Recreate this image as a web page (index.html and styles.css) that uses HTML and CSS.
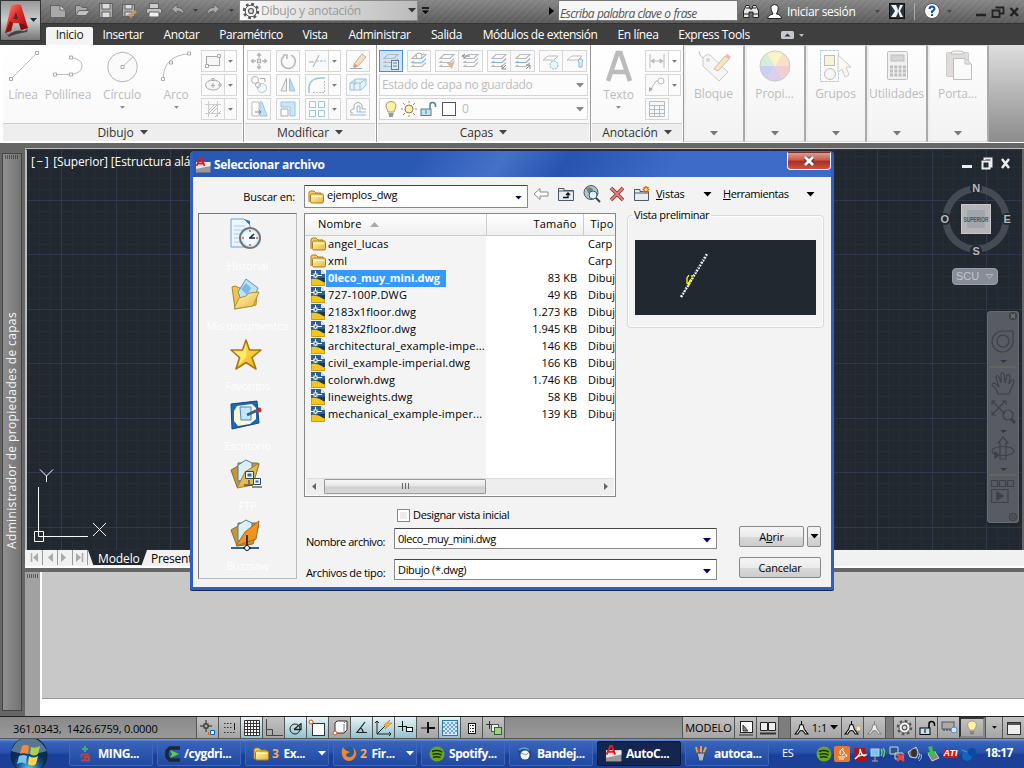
FILE: index.html
```html
<!DOCTYPE html>
<html lang="es">
<head>
<meta charset="utf-8">
<title>Seleccionar archivo</title>
<link rel="stylesheet" href="styles.css">
</head>
<body>
<svg class="defs" width="0" height="0">
  <defs>
    <linearGradient id="gold" x1="0" y1="0" x2="1" y2="1"><stop offset="0" stop-color="#fff8b8"/><stop offset="1" stop-color="#e8b53c"/></linearGradient>
    <linearGradient id="star" x1="0" y1="0" x2="1" y2="1"><stop offset="0" stop-color="#fff27a"/><stop offset="1" stop-color="#efae10"/></linearGradient>
    <linearGradient id="red" x1="0" y1="0" x2="1" y2="1"><stop offset="0" stop-color="#ff8a80"/><stop offset=".45" stop-color="#e02a25"/><stop offset="1" stop-color="#8e0b0d"/></linearGradient>
    <symbol id="folder" viewBox="0 0 16 16"><path d="M1 13V4Q1 2 3 2H6L8 4H13V6" fill="#f5cf62" stroke="#b07a14"/><rect x="2.500" y="5" width="13" height="9" rx="1.500" fill="url(#gold)" stroke="#b07a14"/><path d="M4 7.500H14" stroke="#fffbd8"/></symbol>
    <symbol id="dwg" viewBox="0 0 16 16"><path d="M1 0H11L15 4V16H1Z" fill="#2d5f8c"/><path d="M1 9Q8 8 15 13V16H1Z" fill="#f5c518"/><path d="M7 8L15 13V8Z" fill="#173a5c"/><path d="M11 0V4H15Z" fill="#dce8f2"/><path d="M5.500 1V8M1 5.500H12" stroke="#fff"/><rect x="4" y="4" width="3" height="3" fill="#2d5f8c" stroke="#fff"/><path d="M1.500 9V15.500H14.500V12" fill="none" stroke="#d29a10"/></symbol>
    <symbol id="acad" viewBox="0 0 16 16"><path d="M1 5H15.500V15.500H1Z" fill="#999"/><path d="M1 5H15.500V9L1 12Z" fill="#e8e8e8"/><path d="M1.500 9L5 1H6.500L9.500 9M3 6.500H8.500" fill="none" stroke="#e81818" stroke-width="1.800"/></symbol>
    <symbol id="dd" viewBox="0 0 8 5"><path d="M0 0H8L4 4.500Z" fill="currentColor"/></symbol>
    <symbol id="layers" viewBox="0 0 18 18"><path d="M6 2.500H16L12 6.500H2ZM4 9L2 10.500H12L16 6.500M4 13L2 14.500H12L16 10.500" fill="none" stroke="#b5babe" stroke-width="1.100"/></symbol>
    <symbol id="bulb" viewBox="0 0 16 18"><path d="M5 12Q5 10 3.500 8.500Q1.500 2 8 1.500Q14.500 2 12.500 8.500Q11 10 11 12Z" fill="#fff0a8" stroke="#a49668"/><path d="M5.500 14H10.500M6 16H10" stroke="#777" stroke-width="1.500"/></symbol>
    <symbol id="gear" viewBox="0 0 18 18"><circle cx="9" cy="9" r="7" fill="none" stroke="#555" stroke-width="2.500" stroke-dasharray="2.800 2.700"/><circle cx="9" cy="9" r="5.800" fill="#f4f4f4" stroke="#555"/><circle cx="9" cy="9" r="2.500" fill="#ddd" stroke="#555" stroke-width="1.200"/></symbol>
    <symbol id="lock" viewBox="0 0 18 16"><path d="M11 8V4Q11 1.500 13.500 1.500T16.500 4V6" fill="none" stroke="currentColor" stroke-width="1.500"/><rect x="2" y="8" width="10" height="6.500" fill="#bfe4f2" stroke="currentColor"/><path d="M7 9V13" stroke="currentColor"/></symbol>
    <symbol id="compass" viewBox="0 0 16 16"><path d="M8 1V5M6.500 5L5 10L1 15H4L6 12Q8 10.500 10 12L12 15H15L11 10L9.500 5Z" fill="#eee" stroke="currentColor" stroke-width="1.100"/></symbol>
    <symbol id="spot" viewBox="0 0 16 16"><circle cx="8" cy="8" r="7.500" fill="#6da719"/><path d="M3 5.500Q8 3.500 13 6M3.500 8.500Q8 7 12.500 9M4 11.200Q8 10 11.500 11.700" fill="none" stroke="#143408" stroke-width="1.500"/></symbol>
  </defs>
</svg>

<header class="titlebar">
  <div class="quick">
    <svg width="340" height="24" viewBox="41 0 340 24" fill="#a9a9a9" stroke="#626262">
      <path d="M50.500 5.500H60L65.500 10V17.500H50.500Z"/><path d="M60 6V10H65" fill="#ddd"/>
      <path d="M75.500 15.500V5.500H80L82 7.500H87V10.500H79Z"/><path d="M75.500 15.500L79 10.500H90L86 15.500Z" fill="#c2c2c2"/>
      <rect x="99.500" y="3.500" width="13" height="14"/><path d="M102 4V9H110V4M102 17V12H110V17" fill="#ddd"/>
      <rect x="122.500" y="4.500" width="12" height="12"/><path d="M125 5V9H132V5M125 16V12H132" fill="#ddd"/><path d="M130 17L136 11" stroke="#c99842" stroke-width="2.500"/>
      <rect x="149.500" y="3.500" width="9" height="5" fill="#ccc"/><rect x="146.500" y="8.500" width="15" height="5" rx="1.500" fill="#c2c2c2"/><path d="M149 12H159V17H149Z" fill="#eee"/>
      <path d="M171.500 9L177 4V7.500Q184 7 184 15Q182 11 177 11V14Z"/>
      <path d="M219.500 9L214 4V7.500Q207 7 207 15Q209 11 214 11V14Z"/>
      <path d="M193 9H198L195.500 12ZM229 9H234L231.500 12Z" fill="#3d3d3d" stroke="none"/>
    </svg>
  </div>
  <div class="workspace"><svg width="18" height="18"><use href="#gear"/></svg><span>Dibujo y anotación</span><svg class="dd" width="8" height="5"><use href="#dd"/></svg></div>
  <svg class="customize" width="9" height="8"><path d="M1 1H8" stroke="#000" stroke-width="1.500"/><path d="M1 3.500H8L4.500 7Z"/></svg>
  <div class="stretch"><svg width="5" height="8"><path d="M0 0L5 4L0 8Z"/></svg></div>
  <div class="search">Escriba palabra clave o frase</div>
  <div class="session">
    <svg width="44" height="18" viewBox="0 0 44 18" stroke="#222"><path d="M1.500 15.500V9L4 3.500H7L8 7H10L11 3.500H14L16.500 9V15.500H11V10H7V15.500Z" fill="#e8e8e8"/><path d="M2 12H7M11 12H16M4 6H7M11 6H14"/><path d="M25.500 16.500Q26 13 31 12Q26 3 32.500 2.500Q39 3 34.500 12Q39.500 13 39.500 16.500Z" fill="#fff"/></svg>
    <span>Iniciar sesión</span>
  </div>
  <svg class="winctl" width="160" height="24" viewBox="864 0 160 24">
    <path d="M875 10H880L877.500 13ZM947 10H952L949.500 13Z" fill="#444"/>
    <rect x="889.500" y="3.500" width="15" height="15" fill="#26333f" stroke="#111"/><path d="M891 5H896Q898 8 898 11T896 17H891L895 11ZM903 5H900L898 11L900 17H903L900 11Z" fill="#eef3f6"/>
    <path d="M914.500 3V20" stroke="#aaa"/>
    <circle cx="932" cy="11" r="7.500" fill="#fff" stroke="#555"/><path d="M929.500 9Q929.500 6.500 932 6.500T934.500 9Q934 10.500 932 11.500V13M932 14V16" fill="none" stroke="#0a50b4" stroke-width="2"/>
    <path d="M976 15H986" stroke="#222" stroke-width="2.500"/><path d="M995.500 7.500H1003.500V13.500H1000M992.500 10.500H999.500V17H992.500Z" fill="none" stroke="#222" stroke-width="1.800"/><path d="M1010.500 8L1018 16M1018 8L1010.500 16" stroke="#222" stroke-width="2.500"/>
  </svg>
</header>

<nav class="tabs">
  <span class="t1 on">Inicio</span><span class="t2">Insertar</span><span class="t3">Anotar</span><span class="t4">Paramétrico</span><span class="t5">Vista</span><span class="t6">Administrar</span><span class="t7">Salida</span><span class="t8">Módulos de extensión</span><span class="t9">En línea</span><span class="t10">Express Tools</span>
  <svg class="mini" width="26" height="10"><rect x="1" y="1" width="13" height="8" rx="1.500" fill="#c6c9cf"/><path d="M4.500 6.500L7.500 3.500L10.500 6.500Z" fill="#333"/><path d="M19 4H24L21.500 7Z" fill="#b4b8c0"/></svg>
</nav>
<div class="appbtn"><svg width="39" height="39"><path d="M4 32L7 34Q14 28 23 30L27 28L26 31Q14 33 8 36Z" fill="#444"/><path d="M10 5Q14 2 20 4L27 27L20 29L18 22H12L10 30L4 32Z" fill="url(#red)"/><path d="M12 18H17L15 11Z" fill="#6c2424"/><path d="M4 32L10 30L12 22L9 20Z" fill="#8a1212"/><path d="M18 22L20 29L27 27L24 24Z" fill="#7d0f0f"/><path d="M29 17H36L32.500 21Z" fill="#1d2a3c"/></svg></div>

<section class="ribbon">
  <div class="panel dibujo">
    <div class="tools">
      <div class="big w40"><svg width="34" height="34"><path d="M5 29L31 3" stroke="#bbb"/><path d="M3.500 27.500h3v3h-3ZM29.500 1.500h3v3h-3Z" fill="#fff" stroke="#aaa"/></svg><span>Línea</span></div>
      <div class="big w50"><svg width="34" height="34"><path d="M4 24.500H20Q31 23 31 16T20 7.500" fill="none" stroke="#bbb"/><path d="M2.500 23h3v3h-3ZM18.500 23h3v3h-3ZM18.500 6h3v3h-3Z" fill="#fff" stroke="#aaa"/></svg><span>Polilínea</span></div>
      <div class="big w56"><svg width="34" height="34"><circle cx="17.500" cy="17" r="14.800" fill="#fafafa" stroke="#b5b5b5"/><path d="M17 17L28 7" stroke="#bbb"/><path d="M16 15.500h3v3h-3Z" fill="#fff" stroke="#aaa"/></svg><span>Círculo</span><svg class="car" width="5" height="3"><use href="#dd"/></svg></div>
      <div class="big w50"><svg width="34" height="34"><path d="M4 29Q5 5 30 4" fill="none" stroke="#bbb"/><path d="M2.500 27.500h3v3h-3ZM10.500 11h3v3h-3ZM28.500 2h3v3h-3Z" fill="#fff" stroke="#aaa"/></svg><span>Arco</span><svg class="car" width="5" height="3"><use href="#dd"/></svg></div>
      <div class="col">
        <div class="split"><b><svg width="18" height="16"><rect x="2.500" y="3.500" width="13" height="9" fill="#f6f6f6" stroke="#aaa"/><path d="M1.500 11.500h3v3h-3ZM13.500 1.500h3v3h-3Z" fill="#fff" stroke="#aaa"/></svg></b><i><svg width="5" height="3"><use href="#dd"/></svg></i></div>
        <div class="split"><b><svg width="18" height="16"><ellipse cx="9" cy="8" rx="7.500" ry="5" fill="#f6f6f6" stroke="#aaa"/><path d="M7 8.500H11M9 6V11M8 1.500h2v2H8ZM15 7h2v2h-2Z" stroke="#aaa" fill="#fff"/></svg></b><i><svg width="5" height="3"><use href="#dd"/></svg></i></div>
        <div class="split"><b><svg width="18" height="18"><path d="M4.500 1V17M13.500 1V17M1 4.500H17M1 13.500H17" stroke="#ccc"/><path d="M5 10L10 5M5 13L13 5M8 13L13 8M11 17L17 11" stroke="#bbb"/></svg></b><i><svg width="5" height="3"><use href="#dd"/></svg></i></div>
      </div>
    </div>
    <div class="ptitle">Dibujo <svg width="8" height="5"><use href="#dd"/></svg></div>
  </div>

  <div class="panel modificar">
    <div class="tools grid4">
      <b><svg width="18" height="18"><path d="M9 1V6M9 12V17M1 9H6M12 9H17M7 3.500L9 1.500L11 3.500M7 14.500L9 16.500L11 14.500M3.500 7L1.500 9L3.500 11M14.500 7L16.500 9L14.500 11M7.500 7.500h3v3h-3Z" fill="none" stroke="#b5b5b5" stroke-width="1.300"/></svg></b>
      <b><svg width="18" height="18"><path d="M5 4A7 7 0 1 0 12 3M4 3H8V7" fill="none" stroke="#b9b9b9" stroke-width="1.600"/></svg></b>
      <div class="split"><b><svg width="18" height="18"><path d="M1 10H6M5 15L11 3" stroke="#aaa"/><path d="M8 9H18" stroke="#8fbfe2" stroke-dasharray="3 1"/></svg></b><i><svg width="5" height="3"><use href="#dd"/></svg></i></div>
      <b><svg width="20" height="18"><path d="M6 12L14 2L18 5L10 14Z" fill="#f3dfc0" stroke="#c4b199"/><path d="M6 12L10 14Q7 17 5 15Z" fill="#e69378"/><path d="M2 16.500H14" stroke="#aaa"/></svg></b>
      <b><svg width="18" height="18" fill="none"><circle cx="5" cy="4" r="3.500" stroke="#b5b5b5"/><circle cx="12" cy="12" r="4.500" stroke="#a4c9e5"/><circle cx="8" cy="9" r="2.500" stroke="#b5b5b5"/><path d="M10 2.500H15V6" stroke="#aaa"/></svg></b>
      <b><svg width="18" height="18"><path d="M7.500 2L2 15H7.500Z" fill="#eee" stroke="#b5b5b5"/><path d="M10.500 2L16 15H10.500Z" fill="#b9ddf3" stroke="#9cc5e0"/></svg></b>
      <div class="split"><b><svg width="18" height="18" fill="none"><path d="M1 17V10Q3 2 13 2H17" stroke="#9cc5e0" stroke-width="1.500"/><path d="M5 16.500H16.500V5" stroke="#bbb" stroke-dasharray="2 1"/></svg></b><i><svg width="5" height="3"><use href="#dd"/></svg></i></div>
      <b><svg width="20" height="18"><path d="M2 7L8 3H18V9L13 14H2ZM2 7H12V14M12 7L18 3M7 3V9M6 7V14" fill="#e6f3fa" stroke="#9cc0d4"/></svg></b>
      <b><svg width="18" height="18"><path d="M2 2H9V16H2Z" fill="#fff" stroke="#bbb"/><path d="M10 2H12L17 16H10Z" fill="#c4e2f4" stroke="#9cc5df"/><path d="M5 12H11M9 10L11 12L9 14" stroke="#888" fill="none"/></svg></b>
      <b><svg width="18" height="18"><path d="M2 2H16V16H11V7H2Z" fill="#cbe7f6" stroke="#9cc5df"/><path d="M2 9H9V16H2Z" fill="#fff" stroke="#aaa"/></svg></b>
      <div class="split"><b><svg width="18" height="18" fill="#fff" stroke="#9fc5e0"><path d="M1.500 1.500h6v6h-6ZM10.500 1.500h6v6h-6ZM1.500 10.500h6v6h-6ZM10.500 10.500h6v6h-6Z"/></svg></b><i><svg width="5" height="3"><use href="#dd"/></svg></i></div>
      <b><svg width="20" height="18" fill="none"><path d="M5 13H3Q1 10 5 9H6V5Q10 0 14 5V9H18" stroke="#aaa"/><path d="M2 15H18M9 12H18M9 12V6H12V12" stroke="#8fbde0"/></svg></b>
    </div>
    <div class="ptitle">Modificar <svg width="8" height="5"><use href="#dd"/></svg></div>
  </div>

  <div class="panel capas">
    <div class="tools col">
      <div class="lrow">
        <b class="sel"><svg width="18" height="18"><use href="#layers"/><rect x="9.500" y="8.500" width="7" height="9" fill="#d9eafa" stroke="#6a7a90"/><path d="M11 11H15M11 14H15" stroke="#5a86b0"/></svg></b>
        <b><svg width="18" height="18"><use href="#layers"/><circle cx="9" cy="4" r="3" fill="#fff" stroke="#aaa"/><path d="M2 11H12L16 7" stroke="#8fc0e8" fill="none"/></svg></b>
        <div><b><svg width="18" height="18"><use href="#layers"/><path d="M8 10L13 11L17 8L14 17Z" fill="#dfb793"/></svg></b><b><svg width="18" height="18"><use href="#layers"/><path d="M0 4H8M0 4L3 2M0 4L3 6" stroke="#888" fill="none"/></svg></b></div>
        <div><b><svg width="18" height="18"><use href="#layers"/><path d="M2 10.500H12L16 6.500" stroke="#7eb0df" fill="none"/><path d="M16 13L12 17M12 13V17H16" stroke="#888" fill="none"/></svg></b><b><svg width="18" height="18"><use href="#layers"/><path d="M2 10.500H12L16 6.500" stroke="#7eb0df" fill="none"/><path d="M12 17L16 13H12M16 13V17" stroke="#888" fill="none"/></svg></b></div>
        <div><b><svg width="18" height="18"><path d="M6 4H16L12 8H1Z" fill="#fff" stroke="#bbb"/><circle cx="12" cy="13" r="4" fill="#e8f6fd" stroke="#79b5dd" stroke-dasharray="2 1"/></svg></b><b><svg width="18" height="18"><path d="M6 4H16L12 8H1Z" fill="#fff" stroke="#bbb"/><path d="M13 15H16V11Q18 7 14.500 7T13 11Z" fill="#dcefff" stroke="#8bb6d8"/></svg></b></div>
      </div>
      <div class="combo"><span>Estado de capa no guardado</span><svg width="8" height="5"><use href="#dd"/></svg></div>
      <div class="combo"><svg width="16" height="18"><use href="#bulb"/></svg><svg width="16" height="16"><circle cx="8" cy="8" r="4" fill="#fff0ad" stroke="#917d53"/><path d="M8 0V2M8 14V16M0 8H2M14 8H16M2 2L4 4M12 12L14 14M2 14L4 12M12 4L14 2" stroke="#a78d61"/></svg><svg class="steel" width="18" height="16"><use href="#lock"/></svg><em></em><span>0</span><svg class="last" width="8" height="5"><use href="#dd"/></svg></div>
    </div>
    <div class="ptitle">Capas <svg width="8" height="5"><use href="#dd"/></svg></div>
  </div>

  <div class="panel anot">
    <div class="tools">
      <div class="big w53"><svg width="34" height="34"><path d="M6 31L15.500 3H18.500L28 31M10 22H24" fill="none" stroke="#bbb" stroke-width="4.500"/></svg><span>Texto</span><svg class="car" width="5" height="3"><use href="#dd"/></svg></div>
      <div class="col">
        <div class="split"><b><svg width="18" height="16"><path d="M2 1V15M16 1V15M3 8H15M3 8L6 6V10ZM15 8L12 6V10Z" fill="#bbb" stroke="#bbb"/></svg></b><i><svg width="5" height="3"><use href="#dd"/></svg></i></div>
        <div class="split"><b><svg width="18" height="16"><circle cx="13" cy="4" r="3" fill="#fff" stroke="#bbb"/><path d="M10 4H8L3 12" stroke="#bbb" fill="none"/><path d="M1 15V10L5 12Z" fill="#aaa"/></svg></b><i><svg width="5" height="3"><use href="#dd"/></svg></i></div>
        <b><svg width="18" height="16"><path d="M1.500 .500H16.500V15.500H1.500ZM1 4.500H17M1 8.500H17M1 12.500H17M6.500 5V15M11.500 5V15" fill="#f5f8fb" stroke="#b7bcc2"/></svg></b>
      </div>
    </div>
    <div class="ptitle">Anotación <svg width="8" height="5"><use href="#dd"/></svg></div>
  </div>

  <div class="slim"><svg width="34" height="34"><path d="M2 2Q3 9 9 10" fill="none" stroke="#aaa"/><path d="M6 9Q8 5 13 6L31 23L22 32L6 17Z" fill="#f5f5f5" stroke="#bbb"/><circle cx="11" cy="11" r="2" fill="#ccc"/><path d="M17 20L28 7L32 10L21 22Z" fill="#f6dfac" stroke="#cba785"/><path d="M29 6L33 9" stroke="#e7a49b" stroke-width="3"/></svg><span>Bloque</span><svg class="car" width="8" height="5"><use href="#dd"/></svg></div>
  <div class="slim"><svg width="34" height="34" viewBox="-17 -17 34 34"><path d="M0 0L-8 -13A15 15 0 0 1 8 -13Z" fill="#fbf2b7"/><path d="M0 0L8 -13A15 15 0 0 1 15 0Z" fill="#f8d7b7"/><path d="M0 0H15A15 15 0 0 1 8 13Z" fill="#eec0c4"/><path d="M0 0L8 13A15 15 0 0 1 -8 13Z" fill="#d4c1e6"/><path d="M0 0L-8 13A15 15 0 0 1 -15 0Z" fill="#b7c3f0"/><path d="M0 0H-15A15 15 0 0 1 -8 -13Z" fill="#c9ebc8"/><circle r="15" fill="none" stroke="#bbb"/></svg><span>Propi...</span><svg class="car" width="8" height="5"><use href="#dd"/></svg></div>
  <div class="slim"><svg width="34" height="34"><rect x="1.500" y="1.500" width="18" height="31" fill="none" stroke="#9cb8d8" stroke-dasharray="3 1"/><rect x="5.500" y="6.500" width="10" height="10" fill="#f8f1c8" stroke="#aaa"/><circle cx="11" cy="25" r="5.500" fill="#f4f4f4" stroke="#aaa"/><path d="M19 6V23L23 20L26 28L30 26L27 18H32Z" fill="#fffbe7" stroke="#bbc"/></svg><span>Grupos</span><svg class="car" width="8" height="5"><use href="#dd"/></svg></div>
  <div class="slim"><svg width="34" height="34"><rect x="7.500" y="2.500" width="20" height="28" rx="1" fill="#eee" stroke="#aaa"/><rect x="11" y="6" width="13" height="6" fill="#c9c9c9" stroke="#aaa"/><path d="M10 18H26M10 22H26M10 26H26" stroke="#aaa" stroke-width="3" stroke-dasharray="3 1.300"/></svg><span>Utilidades</span><svg class="car" width="8" height="5"><use href="#dd"/></svg></div>
  <div class="slim"><svg width="34" height="34"><rect x="5.500" y="3.500" width="22" height="24" rx="1" fill="#d7d1cd" stroke="#bbb"/><path d="M10 5Q10 2 13 2H20Q23 2 23 5Z" fill="#f3f3f3" stroke="#aaa"/><path d="M12.500 9.500H24L30.500 15V30.500H12.500Z" fill="#fafafa" stroke="#aaa"/><path d="M24 10V15H30" fill="#ddd" stroke="#aaa"/></svg><span>Porta...</span><svg class="car" width="8" height="5"><use href="#dd"/></svg></div>
</section>

<main class="work">
  <aside class="palette"><div><svg width="14" height="5"><path d="M0 1H14M0 3H14" stroke="#1c1c1c" stroke-dasharray="1 1"/></svg><span>Administrador de propiedades de capas</span></div></aside>
  <div class="docs">
    <section class="canvas">
      <p class="vlabel"><span>[−]</span> [Superior] [Estructura alá</p>
      <svg class="ucs" width="80" height="80" fill="none" stroke="#fff"><path d="M10.500 17V66.500H60" /><path d="M6.500 61.500h9v10h-9Z"/><path d="M12 -.500L18.500 6L25 -.500M18.500 6V12M65 53L78 66M78 53L65 66"/></svg>
      <svg class="wctl" width="52" height="14" stroke="#eee" fill="none"><path d="M0 9.500H10" stroke-width="3"/><path d="M22.500 3V1.500H29.500V9.500H28M20.500 4.500H27.500V11.500H20.500Z" stroke-width="2"/><path d="M40 2L47 11M47 2L40 11" stroke-width="2.500"/></svg>
      <svg class="cube" width="84" height="80" viewBox="934 178 84 80"><circle cx="976" cy="219" r="30" fill="none" stroke="#454b54" stroke-width="7"/><g fill="#212830"><circle cx="976" cy="188" r="6"/><circle cx="976" cy="251" r="6"/><circle cx="945" cy="219" r="6"/><circle cx="1007" cy="219" r="6"/></g><rect x="961.500" y="204.500" width="29" height="29" fill="#b5b5b5" stroke="#c8c8c8"/><rect x="967" y="210" width="18" height="18" fill="#a0a6ae"/><g class="pts"><text x="976" y="192">N</text><text x="976" y="255">S</text><text x="944.500" y="223">O</text><text x="1007" y="223">E</text></g><text class="sup" x="976" y="222" textLength="25" lengthAdjust="spacingAndGlyphs">SUPERIOR</text></svg>
      <div class="scu">SCU <svg width="9" height="6"><path d="M1 .500H8L4.500 4.500Z" fill="none" stroke="#b2b5bc"/></svg></div>
      <div class="navbar"><svg width="32" height="212" viewBox="0 0 32 212" fill="none" stroke="#3d4147" stroke-width="1.200"><circle cx="26" cy="5" r="3.500" fill="#444"/><path d="M24 3L28 7M28 3L24 7" stroke="#777"/><path d="M16 20H26V30A10.500 10.500 0 1 1 16 20Z"/><circle cx="16" cy="30" r="6"/><path d="M13 49H20L16.500 52ZM13 119H20L16.500 122ZM13 157H20L16.500 160Z" fill="#34383e" stroke="none"/><path d="M3 56H29M3 164H29" stroke="#6c7060"/><path d="M11 83Q9 77 5 74Q5 71 9 73L12 76L9 66Q10 63 12 66L14 72L14 63Q16 60 17 63L18 72L20 64Q22 62 23 66L22 73L25 69Q27 68 27 71L22 83Z"/><path d="M5 90L18 103M18 90L5 104M5 94V90H9M15 90H19V94M5 100V104H9"/><circle cx="21" cy="104" r="5"/><path d="M24 108L28 112" stroke-width="3"/><path d="M13 148V132H11L16 126L21 132H19V148Z"/><ellipse cx="16" cy="140" rx="11" ry="4.500"/><path d="M12 144L8 141V147Z" fill="#3d4147"/><path d="M4.500 169.500h6v6h-6ZM12.500 169.500h6v6h-6ZM20.500 169.500h6v6h-6ZM4.500 178.500H21V191.500H4.500Z"/><path d="M10 181V189L16 185Z" fill="#3d4147"/><circle cx="26" cy="206" r="3.500"/><path d="M24 205H28M24 207H28"/></svg></div>
    </section>
    <div class="layout">
      <svg width="61" height="15" fill="#aaa" stroke="#aaa"><path d="M4.500 3V12" stroke-width="1.500"/><path d="M11 3V12L6 7.500ZM26 3V12L21 7.500ZM34 3V12L39 7.500ZM49 3V12L54 7.500Z" stroke="none"/><path d="M55.500 3V12" stroke-width="1.500"/><path d="M15.500 0V15M30.500 0V15M45.500 0V15M60.500 0V15" stroke="#999"/></svg>
      <span class="model">Modelo</span><span class="present">Presentación1</span>
    </div>
    <section class="command"><i><svg width="12" height="5"><path d="M0 1H12M0 3H12" stroke="#1c1c1c" stroke-dasharray="1 1"/></svg></i><div><p></p><p class="prompt"></p></div></section>
  </div>
</main>

<footer class="status">
  <div class="coords">361.0343,&nbsp; 1426.6759, 0.0000</div>
  <b><svg width="18" height="18"><path d="M1 7H13M7 1V13" stroke="#222"/><rect x="5" y="5" width="4" height="4" fill="#aaa" stroke="#222"/><path d="M11.500 11.500h4v4h-4Z" fill="#fff" stroke="#06c"/><path d="M9.500 16V13" stroke="#e50"/></svg></b>
  <b><svg width="18" height="18"><path d="M3 4.500H11M3 8.500H11M3 13.500H14" stroke="#333" stroke-dasharray="1.500 1.500"/><path d="M13.500 4V11" stroke="#222"/></svg></b>
  <b class="on"><svg width="18" height="18"><path d="M1.500 1.500H16.500V16.500H1.500ZM4.500 2V16M7.500 2V16M10.500 2V16M13.500 2V16M2 4.500H16M2 7.500H16M2 10.500H16M2 13.500H16" fill="#fff" stroke="#333"/></svg></b>
  <b><svg width="18" height="18"><path d="M1.500 0V16.500H18M2 10.500H7.500V16" fill="none" stroke="#444"/></svg></b>
  <b class="on"><svg width="18" height="18" fill="none" stroke="#222"><circle cx="8" cy="10" r="5"/><path d="M7 10.500L14 4.500M14 4V10.500H7" stroke-width="1.300"/></svg></b>
  <b class="on"><svg width="20" height="18"><rect x="4.500" y="4.500" width="12" height="12" fill="#fff" stroke="#333"/><circle cx="3" cy="3" r="2" fill="#fff" stroke="#e64b1b"/></svg></b>
  <b><svg width="18" height="18"><path d="M4 4L6 2H16V11L13 14H4Z" fill="#fff" stroke="#333"/><path d="M13 5V13M13 4L15 2" stroke="#777"/><circle cx="4" cy="14" r="2" fill="#fff" stroke="#e64b1b"/></svg></b>
  <b class="on"><svg width="18" height="18"><path d="M12 3L4 13.500H14M7 9Q10 10 10 13" fill="none" stroke="#222" stroke-width="1.200"/></svg></b>
  <b class="on"><svg width="20" height="18"><path d="M3 2V15H17M3 15L11 7M1 4L3 2L5 4M15 13L17 15L15 17" fill="none" stroke="#222"/><path d="M16 1L10 6H13L11 10L18 4H14Z" fill="#ffba2e" stroke="#d77912" stroke-width=".600"/></svg></b>
  <b class="on"><svg width="18" height="18"><path d="M1 7.500H10M5.500 2V12" stroke="#111"/><rect x="9.500" y="8.500" width="6" height="4" fill="#fff" stroke="#111"/></svg></b>
  <b><svg width="18" height="18"><path d="M2 9H11" stroke="#111"/><path d="M9 3V14M9 9H16" stroke="#111" stroke-width="2"/></svg></b>
  <b class="on"><svg width="18" height="18"><rect x="1.500" y="1.500" width="15" height="15" fill="#d5eaff" stroke="#3577a0"/><path d="M2 4H16M2 8H16M2 12H16" stroke="#6ea6dd" stroke-width="2" stroke-dasharray="2 2"/><path d="M4 6H16M4 10H16M4 14H16" stroke="#6ea6dd" stroke-width="2" stroke-dasharray="2 2"/></svg></b>
  <b><svg width="18" height="18"><rect x="5.500" y="4.500" width="7" height="10" fill="#fff" stroke="#111"/><path d="M7 6.500H8M9 6.500H11M7 9.500H8M9 9.500H11M7 12.500H8M9 12.500H11" stroke="#222"/></svg></b>
  <b><svg width="18" height="18"><path d="M1 5.500H9M4.500 2V10" stroke="#333"/><rect x="6.500" y="5.500" width="7" height="7" fill="#eee" stroke="#555"/><rect x="9.500" y="8.500" width="7" height="7" fill="#a1cf86" stroke="#286a22"/></svg></b>
  <div class="sp"></div>
  <b class="w52">MODELO</b>
  <b><svg width="18" height="18"><rect x="3.500" y="2.500" width="12" height="11" fill="#fff" stroke="#222"/><path d="M6 6V12H11Z" fill="#888" stroke="#333"/><path d="M2 16H16" stroke="#333"/></svg></b>
  <b><svg width="18" height="18"><path d="M1.500 3.500H8.500V11.500H1.500ZM9.500 3.500H16.500V11.500H9.500Z" fill="#eee" stroke="#222"/><path d="M1 14.500H17" stroke="#333" stroke-width="2"/></svg></b>
  <u class="w12"></u>
  <b class="w51"><svg width="15" height="15"><use href="#compass"/></svg>&nbsp;1:1&nbsp;<svg width="8" height="5"><use href="#dd"/></svg></b>
  <b><svg width="15" height="15"><use href="#compass"/></svg><svg class="tinybulb" width="7" height="11"><use href="#bulb"/></svg></b>
  <b class="dim"><svg width="15" height="15"><use href="#compass"/></svg></b>
  <u class="w8"></u>
  <b><svg width="17" height="17"><use href="#gear"/></svg></b>
  <b><svg width="18" height="16"><use href="#lock"/></svg></b>
  <b><svg width="18" height="18"><rect x="2" y="3" width="12" height="7" fill="#aaa" stroke="#556"/><path d="M4 12V10M7 12V10M10 12V10" stroke="#333"/><circle cx="14" cy="11" r="3" fill="#cfe9fa" stroke="#58b"/></svg></b>
  <b class="w25"><svg width="14" height="17"><use href="#bulb"/></svg></b>
  <b class="w17"><svg width="5" height="3"><use href="#dd"/></svg></b>
  <b><svg width="16" height="14"><rect x="1.500" y="1.500" width="13" height="12" fill="#eee" stroke="#333"/><path d="M2 3H14" stroke="#555" stroke-width="2"/></svg></b>
</footer>

<footer class="taskbar">
  <div class="start"><svg width="42" height="29"><defs><radialGradient id="orb" cy=".9"><stop offset="0" stop-color="#5fd3f5"/><stop offset=".6" stop-color="#185a92"/><stop offset="1" stop-color="#0b2c55"/></radialGradient></defs><circle cx="21" cy="16" r="18" fill="url(#orb)" stroke="#0a2348"/><path d="M3 12Q10 -3 21 -2T39 12Q21 18 3 12Z" fill="#9db5ca" opacity=".55"/><path d="M14 7Q17 5 21 7L20 15Q16 13 12 15Z" fill="#f08a3c"/><path d="M23 8Q27 10 32 7L30 15Q26 18 22 15Z" fill="#a8d155"/><path d="M11 17Q16 15 19 17L18 25Q14 22 9 25Z" fill="#7ac3ef"/><path d="M21 17Q25 20 30 17L28 25Q24 28 20 25Z" fill="#ffd54d"/></svg></div>
  <div class="tasks">
    <a><svg width="16" height="16"><path d="M8 0V6M5 3H11" stroke="#3bb273" stroke-width="2"/><path d="M12 8.500H4.500V11.500M4 14.500H12V11H8V14" fill="none" stroke="#b9434d" stroke-width="1.800"/></svg><span>MING...</span></a>
    <a class="c2"><svg width="16" height="16"><path d="M15 2H5L2 5V11L5 14H15" fill="none" stroke="#1c2733" stroke-width="3.500"/><path d="M5 4L14 8L5 12L7 8Z" fill="#52d33b"/></svg><span>/cygdri...</span></a>
    <a class="c3"><svg width="16" height="16"><use href="#folder"/></svg><em>3</em><span>Ex...</span><svg class="end" width="8" height="5"><use href="#dd"/></svg></a>
    <a class="c3"><svg width="16" height="16"><circle cx="8" cy="8" r="7" fill="#265c9e"/><path d="M2 1Q-1 8 3 13Q8 17 13 13Q18 7 12 1Q15 8 10 11Q5 12 5 8L9 6Q4 5 2 1Z" fill="#f3872c"/></svg><em>2</em><span>Fir...</span><svg class="end" width="8" height="5"><use href="#dd"/></svg></a>
    <a class="c4"><svg width="16" height="16"><use href="#spot"/></svg><span>Spotify...</span></a>
    <a class="c4"><svg width="16" height="16"><path d="M1 5Q6 -1 12 3L15 7Q15 14 8 15Q2 14 2 9Z" fill="#264b7a"/><circle cx="8" cy="9" r="4.500" fill="#f0f3f6"/><path d="M4 7L9 9L12 6" fill="none" stroke="#999"/><path d="M2 4Q7 0 12 4" fill="none" stroke="#65a2df" stroke-width="1.500"/></svg><span>Bandej...</span></a>
    <a class="c4 active"><svg width="17" height="17"><use href="#acad"/></svg><span>AutoC...</span></a>
    <a><svg width="16" height="16"><path d="M5 8L3 1M8 8V0M10 8L13 1" stroke-width="2" stroke="#e6a640"/><path d="M7 8L5 3" stroke="#d6414d" stroke-width="2"/><path d="M4 7H12L10 15H6Z" fill="#a5bad2" stroke="#346"/></svg><span>autoca...</span></a>
  </div>
  <span class="lang">ES</span>
  <div class="tray">
    <svg width="16" height="16"><use href="#spot"/></svg>
    <svg width="16" height="16"><rect width="16" height="16" rx="2" fill="#e8792b"/><path d="M7 9Q4 6 9 2Q8 5 10 6T8 9M4 11H11M5 13H10M11 9Q14 8 12 11" fill="none" stroke="#fff"/></svg>
    <svg width="16" height="16"><path d="M2 2H13L15 15H3Z" fill="#a81717"/><path d="M3 13Q9 8 8 3Q10 12 14 9Q8 8 3 13" fill="none" stroke="#fff" stroke-width="1.300"/></svg>
    <svg width="17" height="16"><rect x="1" y="3" width="8" height="7" fill="#73c7ef" stroke="#ccd"/><path d="M5 10V15M2 15H8" stroke="#aab"/><path d="M11 3Q13 6 11 10M13 2Q16 6 13 11" fill="none" stroke="#5bd35c" stroke-width="1.500"/></svg>
    <svg width="16" height="16"><path d="M1 1H9V8H1ZM6 7H14V13H6Z" fill="#34547f" stroke="#bdd"/><path d="M8 8L15 15M15 8L8 15" stroke="#e94343" stroke-width="2.500"/></svg>
    <svg width="16" height="16"><path d="M1 6L9 1Q13 7 9 12L3 11Z" fill="#777" stroke="#ccc"/><ellipse cx="7" cy="7" rx="3" ry="4" fill="#333"/><path d="M12 7Q14 9 11 13M14 8Q16 12 12 15" fill="none" stroke="#a7c4e5"/></svg>
    <svg width="16" height="16"><path d="M3 8L10 6L14 12L7 15Z" fill="#888" stroke="#ccc"/><path d="M3 1L5 6H2L8 11L11 5H8L7 0Z" fill="#34c443"/></svg>
    <span class="ati">ATI</span>
    <svg width="16" height="16"><circle cx="7" cy="10" r="5" fill="#1366bd"/><circle cx="12" cy="6" r="4" fill="#0a4b9e"/><path d="M2 4L7 6" stroke="#3da1e8"/></svg>
  </div>
  <time>18:17</time>
</footer>

<section class="dialog">
  <header><svg width="16" height="16"><use href="#acad"/></svg><h1>Seleccionar archivo</h1><button class="close"><svg width="12" height="10"><path d="M2 1.500L10 8.500M10 1.500L2 8.500" stroke="#46404a" stroke-width="4.500"/><path d="M2 1L10 9M10 1L2 9" stroke="#fff" stroke-width="2.700"/></svg></button></header>
  <div class="dbody">
    <label class="look">Buscar en:</label>
    <div class="bar">
      <div class="field lookin"><svg width="16" height="16"><use href="#folder"/></svg><span>ejemplos_dwg</span><svg class="navy" width="7" height="4"><use href="#dd"/></svg></div>
      <svg width="16" height="16"><path d="M1 8L7 2.500V6H15V10H7V13.500Z" fill="#fff" stroke="#888"/></svg>
      <svg width="18" height="16"><path d="M1.500 14.500V2.500H7V4.500H16.500V14.500ZM1 5H16" fill="#e6ebf2" stroke="#4d5866"/><path d="M6 11.500H11V7M9 9L11 7L13 9" fill="none" stroke="#111" stroke-width="1.300"/></svg>
      <svg width="18" height="18"><circle cx="8" cy="7.500" r="7" fill="#b0c8c5" stroke="#556"/><path d="M3 3Q7 1 10 4Q9 8 5 8Z" fill="#668983"/><circle cx="10" cy="10" r="4" fill="#def2f9" stroke="#456"/><path d="M13 13L17 17" stroke="#345" stroke-width="2"/></svg>
      <svg width="16" height="16"><path d="M2 2L14 14M14 2L2 14" stroke="#7f292c" stroke-width="3.500"/><path d="M2 2L14 14M14 2L2 14" stroke="#e97a7e" stroke-width="2"/></svg>
      <svg width="18" height="18"><path d="M1.500 15.500V4.500H7V6.500H15.500V15.500ZM1 8H15" fill="#e8edf4" stroke="#4d5866"/><path d="M13 1V8M9.500 4.500H16.500M10.500 2L15.500 7M15.500 2L10.500 7" stroke="#e05a1b" stroke-width="1.500"/><circle cx="13" cy="4.500" r="1.500" fill="#fff04c"/></svg>
      <span class="vistas"><u>V</u>istas</span><svg class="d1" width="9" height="5"><use href="#dd"/></svg>
      <span class="herr"><u>H</u>erramientas</span><svg class="d2" width="9" height="5"><use href="#dd"/></svg>
    </div>
    <nav class="places">
      <a><svg width="34" height="34"><path d="M2 1H15L21 7V29H2Z" fill="#edf5ff" stroke="#6e9fd2"/><path d="M15 1L21 7V3Z" fill="#2877c7"/><path d="M5 8H16M5 12H14M5 16H12M5 20H11M5 24H11" stroke="#a8c9ed"/><circle cx="21" cy="20" r="10" fill="#d7eff7" stroke="#70767b" stroke-width="2"/><circle cx="21" cy="20" r="7" fill="#eefaff"/><path d="M21 20L25 16M20 20H26" stroke="#223" stroke-width="1.600"/><path d="M21 12V14M21 26V28M13 20H15M27 20H29" stroke="#e06030" stroke-width="1.600"/></svg><span>Historial</span></a>
      <a><svg width="34" height="34"><path d="M3 9L6 8L13 11L28 14L27 27L6 31Z" fill="#f1c348" stroke="#aa8231"/><path d="M9 14L17 1L29 10L24 22L12 22Z" fill="#bfe3fa" stroke="#5e91be"/><path d="M12 11L17 5L22 10L18 17Z" fill="#7bb7ec"/><path d="M5 31L10 20L17 18L20 15L30 14L24 28Z" fill="url(#gold)" stroke="#b68c35"/></svg><span>Mis documentos</span></a>
      <a><svg width="34" height="34"><path d="M17 2L20.500 12H32L23 19.500L27 31L17 24.500L7 31L10.500 19.500L2 12H13.500Z" fill="url(#star)" stroke="#ad7614" stroke-width="1.600" stroke-linejoin="round"/><path d="M17 6V19L10 27L12 19L6 14H14.500Z" fill="#fff27a" opacity=".8"/></svg><span>Favoritos</span></a>
      <a><svg width="34" height="34"><path d="M2 6L28 3L30 25L3 31Z" fill="#1769bc" stroke="#164685"/><path d="M8 8L23 6L27 10V21L21 26L9 28L5 23V13Z" fill="#fff7d8"/><path d="M11 9H22V22H12Z" fill="#c4e6ff" stroke="#4487c5"/><path d="M18 17L29 12" stroke="#3a6484" stroke-width="3"/><circle cx="30" cy="12" r="2.500" fill="#d52b23"/></svg><span>Escritorio</span></a>
      <a><svg width="34" height="34"><path d="M2 12L9 8V5H28L30 6L24 26L8 29Z" fill="#c19742" stroke="#8a6b2a"/><path d="M9 7L17 2L23 5V20L9 23Z" fill="#d9eff9" stroke="#527e9d"/><path d="M8 30L16 14L30 5L24 27Z" fill="#e0b958" stroke="#a47c2f"/><path d="M16.500 13.500H24.500V20.500H16.500ZM24.500 20.500H31.500V26.500H24.500Z" fill="#e8f5fa" stroke="#345"/><path d="M18.500 15.500H22.500V18.500H18.500ZM26.500 22.500H29.500V24.500H26.500Z" fill="#2f6fb0"/><path d="M20 22V26M15 27H24M23 29H33" stroke="#223"/></svg><span>FTP</span></a>
      <a><svg width="34" height="34"><path d="M2 12L9 8V5H28L30 7L24 26L8 28Z" fill="#c19742" stroke="#8a6b2a"/><path d="M9 7L17 2L23 5V20L9 23Z" fill="#d9eff9" stroke="#527e9d"/><path d="M7 28L16 14L30 3L27 21Z" fill="#ed9423" stroke="#a96619"/><path d="M2 30H30" stroke="#28619c" stroke-width="2"/><path d="M18 17V28M14 30H22" stroke="#111" stroke-width="1.500"/><circle cx="18" cy="30" r="2.500" fill="#fff" stroke="#111"/></svg><span>Buzzsaw</span></a>
    </nav>
    <div class="content">
      <div class="upper">
        <div class="files">
          <table>
            <thead><tr><th class="n">Nombre <svg width="9" height="5"><path d="M0 5H9L4.500 0Z" fill="#aaa"/></svg></th><th class="s">Tamaño</th><th class="k">Tipo</th></tr></thead>
            <tbody>
              <tr><td><svg><use href="#folder"/></svg><span>angel_lucas</span></td><td></td><td>Carp</td></tr>
              <tr><td><svg><use href="#folder"/></svg><span>xml</span></td><td></td><td>Carp</td></tr>
              <tr class="chosen"><td><svg><use href="#dwg"/></svg><span>0leco_muy_mini.dwg</span></td><td>83 KB</td><td>Dibuj</td></tr>
              <tr><td><svg><use href="#dwg"/></svg><span>727-100P.DWG</span></td><td>49 KB</td><td>Dibuj</td></tr>
              <tr><td><svg><use href="#dwg"/></svg><span>2183x1floor.dwg</span></td><td>1.273 KB</td><td>Dibuj</td></tr>
              <tr><td><svg><use href="#dwg"/></svg><span>2183x2floor.dwg</span></td><td>1.945 KB</td><td>Dibuj</td></tr>
              <tr><td><svg><use href="#dwg"/></svg><span>architectural_example-impe...</span></td><td>146 KB</td><td>Dibuj</td></tr>
              <tr><td><svg><use href="#dwg"/></svg><span>civil_example-imperial.dwg</span></td><td>166 KB</td><td>Dibuj</td></tr>
              <tr><td><svg><use href="#dwg"/></svg><span>colorwh.dwg</span></td><td>1.746 KB</td><td>Dibuj</td></tr>
              <tr><td><svg><use href="#dwg"/></svg><span>lineweights.dwg</span></td><td>58 KB</td><td>Dibuj</td></tr>
              <tr><td><svg><use href="#dwg"/></svg><span>mechanical_example-imper...</span></td><td>139 KB</td><td>Dibuj</td></tr>
            </tbody>
          </table>
          <div class="rest"></div>
          <div class="scroll"><svg width="18" height="15"><path d="M10 4V11L6 7.500Z" fill="#666"/></svg><div><svg width="9" height="7"><path d="M1.500 0V6M4.500 0V6M7.500 0V6" stroke="#666"/></svg></div><svg class="right" width="18" height="15"><path d="M8 4V11L12 7.500Z" fill="#666"/></svg></div>
        </div>
        <fieldset><legend>Vista preliminar</legend><svg width="181" height="75" viewBox="635 240 181 75"><rect x="635" y="240" width="181" height="75" fill="#212830"/><path d="M681 297L707 254" stroke="#fff" stroke-width="2.500" stroke-dasharray="2 1"/><path d="M681 295L706 255" stroke="#212830" stroke-width=".800" stroke-dasharray="3 2"/><path d="M689 275L687 278V283L689 285L690 281M688 284L691 279M691 276H693" stroke="#ff0" fill="none" stroke-width="1.300"/></svg></fieldset>
      </div>
      <div class="check"><i></i><span>Designar vista inicial</span></div>
      <div class="frow"><label>Nombre archivo:</label><div class="field"><span>0leco_muy_mini.dwg</span><svg class="navy" width="8" height="5"><use href="#dd"/></svg></div><button class="open"><span>A<u>b</u>rir</span></button><button class="more"><svg width="9" height="5"><use href="#dd"/></svg></button></div>
      <div class="frow two"><label>Archivos de tipo:</label><div class="field"><span>Dibujo (*.dwg)</span><svg class="navy" width="8" height="5"><use href="#dd"/></svg></div><button class="cancel">Cancelar</button></div>
    </div>
  </div>
</section>
</body>
</html>
```
FILE: styles.css
```css
* { box-sizing: border-box; }
body { margin: 0; width: 1024px; height: 768px; overflow: hidden; display: flex; flex-direction: column; position: relative; background: #666; font: 12px/16px "Open Sans", "Noto Sans", sans-serif; letter-spacing: -.35px; color: #000; }
svg { display: block; flex: none; }
.defs { position: absolute; }
p, h1 { margin: 0; }

.titlebar { height: 24px; flex: none; display: flex; align-items: flex-start; background: repeating-linear-gradient(135deg, #ffffff0b 0 2px, #0000 2px 5px), linear-gradient(#858585, #5a5a5a); border-bottom: 1px solid #333; }
.quick { width: 239px; padding-left: 41px; overflow: hidden; height: 23px; }
.workspace { width: 179px; height: 21px; background: linear-gradient(90deg, #fafafa, #bbb); border: 1px solid #888; display: flex; align-items: center; padding-left: 2px; gap: 1px; color: #999; letter-spacing: -.25px; }
.workspace .dd { margin: 0 1px 0 auto; color: #333; }
.customize { margin: 7px 0 0 3px; }
.stretch { flex: 1; padding: 7px 4px 0 0; display: flex; justify-content: flex-end; }
.search { width: 180px; height: 21px; background: #f7f7f7; border: 1px solid #777; color: #555; font-style: italic; padding: 4px 0 0 1px; line-height: 17px; letter-spacing: -.62px; word-spacing: .5px; white-space: nowrap; }
.session { width: 126px; padding: 2px 0 0 4px; display: flex; color: #fff; white-space: nowrap; }
.session span { padding: 2px 0 0 1px; letter-spacing: -.32px; }
.tabs { height: 21px; flex: none; background: #3f3f3f; color: #fff; padding-left: 46px; display: flex; padding-top: 3px; letter-spacing: -.35px; }
.tabs span { text-align: center; line-height: 16px; height: 18px; white-space: nowrap; }
.tabs .on { background: #f4f4f4; color: #222; border-radius: 2px 2px 0 0; }
.t1 { width: 47px; } .t2 { width: 60px; } .t3 { width: 57px; } .t4 { width: 82px; letter-spacing: -.5px; } .t5 { width: 46px; }
.t6 { width: 83px; } .t7 { width: 51px; } .t8 { width: 136px; } .t9 { width: 60px; } .t10 { width: 92px; }
.tabs .t4, .tabs .t8 { letter-spacing: -.45px; }
.mini { margin: 3px 0 0 20px; }
.appbtn { position: absolute; left: 0; top: 0; width: 41px; height: 41px; border: 1px solid #333; background: linear-gradient(#999, #ccc 50%, #777); }

.ribbon { height: 98px; flex: none; background: linear-gradient(#dedede, #8c8c8c); display: flex; border-bottom: 1px solid #fff; color: #bcbcbc; }
.panel { display: flex; flex-direction: column; background: #fff; border-right: 1px solid #999; border-left: 1px solid #fff; }
.dibujo { width: 244px; padding-left: 2px; }
.modificar { width: 133px; } .capas { width: 214px; } .anot { width: 93px; }
.tools { flex: 1; display: flex; padding-top: 5px; background: linear-gradient(#fff, #f9f9f9); }
.ptitle { height: 18px; background: #eee; border-top: 1px solid #ccc; margin: 0 1px 1px 0; color: #333; display: flex; align-items: center; justify-content: center; gap: 6px; letter-spacing: -.1px; }
.ptitle svg { color: #444; }
.big { display: flex; flex-direction: column; align-items: center; letter-spacing: -.1px; }
.big > span { margin-top: 3px; }
.big .car { margin-top: 3px; color: #888; }
.w40 { width: 40px; } .w50 { width: 50px; } .w56 { width: 58px; } .w53 { width: 53px; }
.col { display: flex; flex-direction: column; gap: 2px; }
.tools b { width: 24px; height: 22px; border: 1px solid #d7d7d7; background: #fafafa; display: flex; align-items: center; justify-content: center; }
.split { display: flex; }
.split i { width: 13px; height: 22px; border: 1px solid #d7d7d7; margin-left: -1px; display: flex; align-items: center; justify-content: center; color: #777; }
.grid4 { display: grid; grid-template-columns: 24px 24px 36px 24px; gap: 2px 5px; padding-left: 2px; align-content: start; }
.capas .tools { padding-left: 1px; }
.lrow { display: flex; gap: 4px; }
.lrow div { display: flex; }
.lrow div b + b { border-left: 0; }
.tools .sel { background: #cfe4fa; border-color: #4b8ddb; }
.combo { width: 209px; height: 22px; border: 1px solid #d5d5d5; background: #fcfcfc; display: flex; align-items: center; justify-content: space-between; padding: 0 3px 0 2px; letter-spacing: -.35px; }
.combo > svg:last-child { color: #888; }
.combo em { width: 14px; height: 14px; border: 1px solid #555; background: #fff; margin: 0 4px 0 3px; }
.combo:last-child { justify-content: flex-start; gap: 2px; padding-left: 3px; }
.combo .last { margin-left: auto; }
.steel { color: #5a7c8c; }
.slim { width: 61px; border: 1px solid #d8d8d8; border-right: 2px solid #aaa; border-left: 2px solid #eee; background: linear-gradient(#fefefe, #f2f2f2); display: flex; flex-direction: column; align-items: center; padding: 3px 2px 5px 0; letter-spacing: -.1px; }
.slim > svg:first-child { opacity: .75; }
.slim span { margin-top: 3px; }
.slim .car { margin-top: auto; color: #777; }

.work { height: 573px; flex: none; display: flex; background: #666; padding-top: 5px; }
.palette { width: 25px; padding: 5px 3px 4px 2px; }
.palette div { height: 558px; border: 1px solid #444; background: linear-gradient(90deg, #909090, #737373); display: flex; flex-direction: column; align-items: center; padding-top: 1px; }
.palette span { writing-mode: vertical-rl; transform: rotate(180deg); color: #f4f4f4; height: 389px; text-align: left; letter-spacing: .36px; }
.docs { flex: 1; display: flex; flex-direction: column; border-top: 1px solid #bbb; }
.canvas { height: 401px; position: relative; margin: 0 2px 0 0; border-left: 2px solid #bbb; border-top: 1px solid #333; background: repeating-linear-gradient(90deg, #0000 0 34.300px, #31384e 34.300px 35.300px, #0000 35.300px 54.400px), repeating-linear-gradient(#0000 0 49.800px, #31384e 49.800px 50.800px, #0000 50.800px 54.500px), repeating-linear-gradient(90deg, #0000 0 1.600px, #262d38 1.600px 2.600px, #0000 2.600px 10.880px), repeating-linear-gradient(#0000 0 6.300px, #262d38 6.300px 7.300px, #0000 7.300px 10.900px), #212830; }
.vlabel { color: #fff; padding: 4px 0 0 4px; width: 163px; white-space: nowrap; letter-spacing: -.13px; }
.vlabel span { letter-spacing: 1.500px; }
.ucs { position: absolute; left: 1px; bottom: 0; overflow: visible; }
.wctl { position: absolute; left: 935px; top: 7px; }
.cube { position: absolute; left: 907px; top: 28px; }
.pts { font: bold 11px "Liberation Sans", sans-serif; fill: #b5b7ba; text-anchor: middle; }
.sup { font: bold 7px "Liberation Sans", sans-serif; fill: #4d535b; text-anchor: middle; letter-spacing: 0; }
.scu { position: absolute; left: 925px; top: 118px; width: 46px; height: 17px; border-radius: 4px; background: #888c98; border: 1px solid #9a9eaa; color: #c3c6cc; font: 11px/15px "Liberation Sans", sans-serif; padding-left: 3px; display: flex; gap: 6px; align-items: center; letter-spacing: 0; }
.navbar { position: absolute; left: 960px; top: 161px; width: 32px; height: 212px; border-radius: 4px; background: #585c62; box-shadow: 0 0 0 1px #686c72 inset, 0 0 3px #151a20; }
.layout { height: 18px; display: flex; background: #f1f1f1; padding: 0 0 0 2px; border-bottom: 2px solid #fff; letter-spacing: -.1px; }
.layout span { height: 15px; line-height: 18px; }
.model { width: 59px; padding-left: 10px; background: #212830; color: #fff; clip-path: polygon(0 0, 100% 0, 91% 100%, 9% 100%); }
.present { padding-left: 4px; letter-spacing: -.25px; }
.command { margin-top: 4px; flex: 1; display: flex; }
.command > i { width: 17px; border-right: 2px solid #fff; background: #a1a1a1; padding: 2px 0 0 2px; }
.command div { flex: 1; display: flex; flex-direction: column; background: #c8c8c8; }
.command p { flex: 1; }
.command .prompt { flex: none; height: 18px; background: #fff; border-top: 1px solid #999; }

.status { height: 23px; flex: none; display: flex; border-top: 1px solid #222; border-bottom: 1px solid #555; background: linear-gradient(#8a8a8a, #999); letter-spacing: 0; font-size: 11px; }
.coords { width: 197px; padding: 4px 0 0 13px; letter-spacing: -.15px; white-space: nowrap; }
.status b { width: 22px; font-weight: normal; border-left: 1px solid #555; background: linear-gradient(#c2c2c2, #a5a5a5); display: flex; align-items: center; justify-content: center; overflow: hidden; flex: none; white-space: nowrap; }
.coords + b { margin-left: -1px; }
.status .on { background: linear-gradient(#e5f4f5, #94c1ce); }
.status .sp { flex: 1; border-left: 1px solid #555; }
.status .w52 { width: 52px; letter-spacing: -.05px; } .status .w51 { width: 51px; } .status .w25 { width: 26px; border: 2px inset #888; } .status .w17 { width: 17px; }
.w12 { width: 12px; background: #7d7d7d; border-left: 1px solid #555; } .w8 { width: 8px; background: #7d7d7d; border-left: 1px solid #555; }
.status .dim { color: #888; }
.tinybulb { margin: 4px 0 0 -4px; }

.taskbar { height: 29px; flex: none; display: flex; background: linear-gradient(#6f9fe8, #3762bc 3px, #2853ae 45%, #1b3f97 55%, #1d4196); color: #fff; align-items: flex-start; }
.start { width: 69px; padding-left: 8px; }
.tasks { display: flex; gap: 4px; padding-top: 2px; width: 700px; }
.tasks a { width: 84px; height: 25px; border: 1px solid #4066b8; border-radius: 2px; background: linear-gradient(#3963b9, #2049a2); padding-left: 7px; display: flex; align-items: center; gap: 3px; font-weight: bold; white-space: nowrap; letter-spacing: -.45px; }
.tasks a:first-child { gap: 5px; } .tasks a:last-child { gap: 5px; }
.tasks .c3 { padding-right: 2px; }
.tasks .c4 { gap: 4px; }
.tasks .active { gap: 4px; }
.tasks em { color: #ffac52; font-style: normal; margin-right: 2px; }
.tasks .end { margin-left: auto; }
.tasks .active { background: #14264e; border-color: #0c1936; }
.lang { width: 47px; padding: 6px 0 0 13px; font-size: 11px; }
.tray { width: 163px; height: 29px; display: flex; align-items: center; gap: 2px; }
.ati { font: italic bold 9px/9px "Liberation Sans", sans-serif; background: #d8151c; width: 15px; text-align: center; border-radius: 3px 0; letter-spacing: 0; }
time { padding: 6px 0 0 6px; font-weight: bold; letter-spacing: -.6px; }

.dialog { position: absolute; left: 190px; top: 151px; width: 644px; height: 439px; background: #2f60bf; padding: 0 3px 3px; border-radius: 4px 4px 2px 2px; box-shadow: 0 1px #182748; }
.dialog header { height: 26px; display: flex; align-items: center; padding: 2px 0 0 2px; gap: 3px; background: linear-gradient(125deg, #2a59b4 0 35%, #4671c8 48%, #2854ae 58%, #3d6bc7 75%); }
.dialog h1 { font-size: 12px; color: #fff; letter-spacing: -.3px; flex: 1; }
.dialog svg { flex: none; }
.close { width: 44px; height: 18px; background: linear-gradient(#dc9c91, #c45a4a 45%, #aa2d20 50%, #c9543d); border: 1px solid #fff; border-top-color: #733; border-radius: 0 0 4px 4px; padding: 0; display: grid; place-items: center; align-self: flex-start; margin: -1px 0 0; }
.dbody { height: 410px; background: #f3f3f3; display: grid; grid-template-columns: 99px 1fr; grid-template-rows: 28px 366px; column-gap: 7px; padding: 8px 0 0 5px; font-size: 11px; letter-spacing: -.2px; white-space: nowrap; }
.look { text-align: right; padding: 4px 2px 0 0; }
.bar { display: flex; height: 23px; align-items: center; position: relative; gap: 8px; }
.bar > svg { margin-top: -5px; }
.field { background: #fff; border: 1px solid #888; border-top-color: #444; display: flex; align-items: center; justify-content: space-between; padding: 0 5px 0 3px; border-radius: 1px; }
.field span { flex: 1; }
.lookin { width: 224px; height: 23px; gap: 3px; margin-right: -3px; }
.lookin span { margin-top: -3px; }
.navy { color: #000066; margin-top: 3px; }
.vistas { margin: -5px 0 0 -3px; width: 39px; } .herr { margin: -5px 0 0 3px; width: 64px; letter-spacing: -.42px; } .bar > .d2 { margin-left: 11px; margin-top: -5px; }
.places { border: 1px solid #777; border-right-color: #bbb; border-bottom-color: #bbb; display: flex; flex-direction: column; padding: 4px 0 0; }
.places a { height: 60px; display: flex; flex-direction: column; align-items: center; color: #fff; }
.places svg { margin-left: -3px; }
.places span { margin-top: 6px; line-height: 16px; }
.upper { display: flex; gap: 11px; height: 284px; }
.files { width: 312px; border: 1px solid #888; background: #fff; display: flex; flex-direction: column; overflow: hidden; }
table { border-collapse: collapse; table-layout: fixed; width: 310px; letter-spacing: 0; font-size: 11px; }
th { height: 21px; font-weight: normal; background: linear-gradient(#fff, #efefef); padding: 0; text-align: left; border-bottom: 1px solid #ccc; border-right: 1px solid #ccc; letter-spacing: .2px; }
th.n { width: 181px; padding-left: 13px; } th.n svg { display: inline; margin-left: 5px; vertical-align: 1px; } th.s { width: 97px; text-align: right; padding-right: 6px; } th.k { padding-left: 7px; width: 32px; }
td { height: 17px; padding: 0; line-height: 16px; overflow: hidden; white-space: nowrap; }
td:first-child { background: #f4f4f4; display: flex; align-items: center; padding-left: 5px; letter-spacing: .18px; }
td:first-child svg { width: 16px; height: 16px; }
td:nth-child(2) { text-align: right; padding-right: 6px; } td:nth-child(3) { padding-left: 5px; }
td span { padding: 0 2px; height: 17px; }
.chosen span { background: #3399ff; color: #fff; font-weight: bold; padding-right: 6px; letter-spacing: -.02px; }
.rest { flex: 1; background: linear-gradient(90deg, #f4f4f4 181px, #fff 181px); }
.scroll { height: 17px; display: flex; background: #eee; border-top: 1px solid #ddd; margin: 0 1px 1px; }
.scroll div { width: 162px; height: 15px; border: 1px solid #999; background: linear-gradient(#f7f7f7, #e4e4e4 48%, #d0d0d0 52%, #d8d8d8); display: grid; place-items: center; border-radius: 1px; }
.scroll .right { margin-left: auto; }
fieldset { width: 195px; height: 120px; margin: -5px 0 0; border: 1px solid #cfdbe5; border-radius: 4px; padding: 18px 7px 0; box-shadow: 0 0 0 1px #fff inset; }
legend { padding: 0 2px; margin-left: -3px; line-height: 14px; letter-spacing: -.35px; }
.check { display: flex; align-items: center; padding: 6px 0 0 93px; gap: 3px; height: 30px; letter-spacing: -.35px; }
.check i { width: 13px; height: 13px; border: 1px solid #888; background: #ececec; box-shadow: 0 0 0 2px #fff inset; }
.frow { display: flex; align-items: flex-start; height: 31px; padding-top: 1px; }
.frow label { width: 89px; padding: 6px 0 0 2px; letter-spacing: -.45px; }
.frow .field { width: 323px; height: 21px; margin-left: 1px; letter-spacing: -.45px; }
.two label, .two .field { letter-spacing: -.35px; }
.frow button { font: 11px "Open Sans", sans-serif; letter-spacing: -.2px; height: 21px; border: 1px solid #888; border-radius: 2px; background: linear-gradient(#f5f5f5, #ebebeb 50%, #d8d8d8 55%, #ccc); padding: 0; margin-top: -2px; }
.open { width: 65px; margin-left: 22px; }
.frow .more { width: 14px; margin-left: 3px; display: grid; place-items: center; }
.cancel { width: 82px; margin-left: 22px; }
```
